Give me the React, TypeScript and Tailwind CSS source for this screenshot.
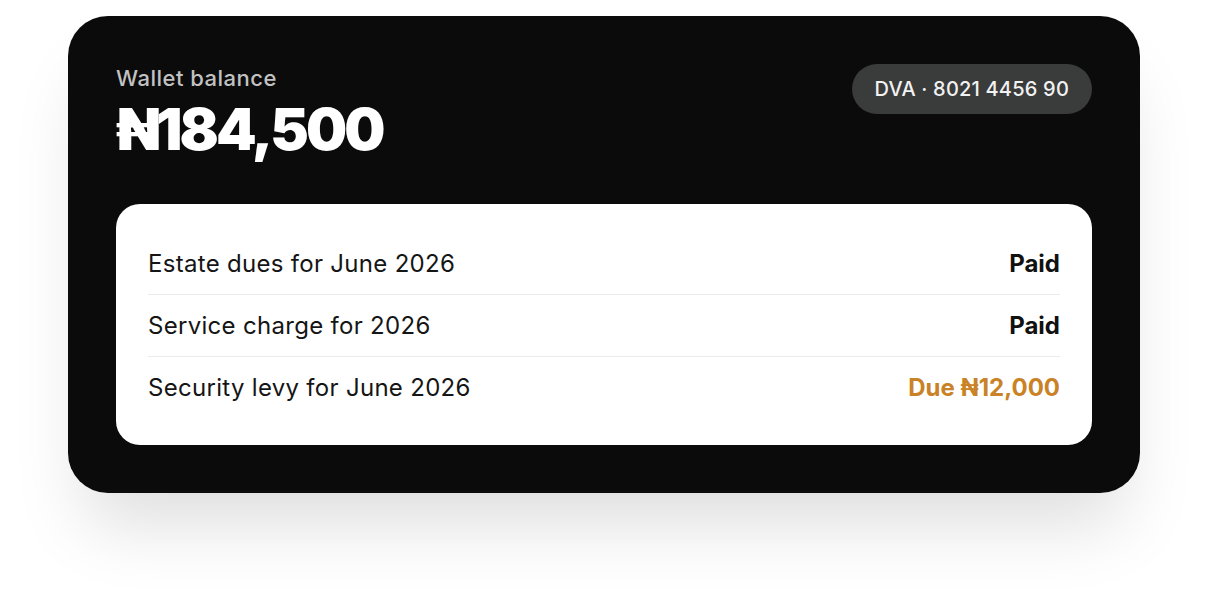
const rows = [
  { label: 'Estate dues for June 2026', status: 'Paid', due: false },
  { label: 'Service charge for 2026', status: 'Paid', due: false },
  { label: 'Security levy for June 2026', status: 'Due ₦12,000', due: true },
];

export default function App() {
  return (
    <div
      className="min-h-[612px] w-full bg-white px-[68px] pt-4"
      style={{ fontFamily: 'Inter, "Noto Sans", sans-serif' }}
    >
      <div className="rounded-[40px] bg-[#0b0b0b] px-12 pb-12 pt-[48px] shadow-[0_48px_70px_-16px_rgba(0,0,0,0.13)]">
        <div className="flex items-start justify-between">
          <div>
            <p className="text-[22px] leading-[28px] font-medium tracking-[0.5px] text-[#c2c2c2]">
              Wallet balance
            </p>
            <h1 className="mt-[6px] text-[58px] leading-[62px] font-black tracking-[-3px] text-white">
              ₦184,500
            </h1>
          </div>

          <div className="flex h-[50px] items-center rounded-full bg-[#3a3b3b] px-[23px] text-[20px] font-medium tracking-[0.2px] text-[#f2f2f2]">
            DVA · 8021 4456 90
          </div>
        </div>

        <div className="mt-[44px] rounded-[24px] bg-white px-8 pb-[27px] pt-[29px]">
          {rows.map((row, i) => (
            <div
              key={row.label}
              className={`flex items-center justify-between py-[15px] ${
                i < rows.length - 1 ? 'border-b border-[#ebebeb]' : ''
              }`}
            >
              <span className="text-[24px] leading-[31px] tracking-[0.3px] text-[#151515]">
                {row.label}
              </span>
              <span
                className={`text-[24px] leading-[31px] font-bold ${
                  row.due ? 'text-[#c98225]' : 'text-[#111111]'
                }`}
              >
                {row.status}
              </span>
            </div>
          ))}
        </div>
      </div>
    </div>
  );
}
